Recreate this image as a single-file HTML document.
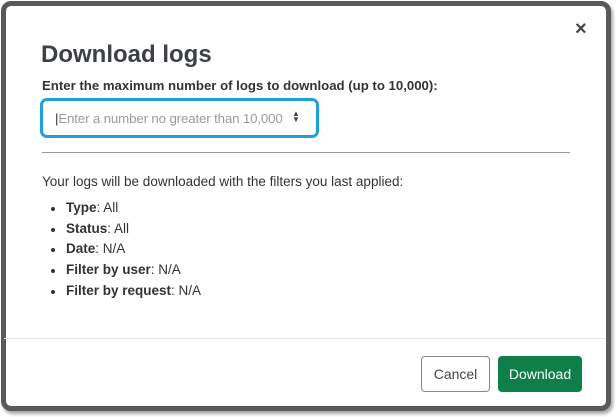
<!DOCTYPE html>
<html><head><style>
*{box-sizing:border-box;margin:0;padding:0}
body{width:616px;height:417px;background:#fff;font-family:"Liberation Sans",sans-serif;position:relative;overflow:hidden;color:#333}
.modal{position:absolute;left:1px;top:1px;width:610px;height:410px;border:5px solid #5a5a5a;border-radius:10px;background:#fff;box-shadow:2px 3px 3px rgba(0,0,0,.35)}
.x{position:absolute;left:575px;top:18px;font-size:20px;font-weight:bold;color:#444}
h1{position:absolute;left:41px;top:41px;font-size:24px;font-weight:bold;color:#3d4145}
.lbl{position:absolute;left:42px;top:78px;font-size:13.2px;font-weight:bold;color:#333}
.inp{position:absolute;left:40px;top:98px;width:279px;height:40px;border:3px solid #1ea0d8;border-radius:7px;font-size:13.3px;color:#9a9a9a;padding:10px 0 0 12px;letter-spacing:-0.15px}
.spin{position:absolute;left:292px;top:111px;font-size:8px;color:#444;line-height:6px}
.sep{position:absolute;left:42px;top:152px;width:528px;height:1px;background:#999}
.t{position:absolute;left:42px;top:174px;font-size:13.5px;color:#333}
ul{position:absolute;left:50px;top:200px;font-size:13.5px;list-style:none}
li{height:20.7px;position:relative;padding-left:16px}
li:before{content:"";position:absolute;left:1px;top:7px;width:4px;height:4px;border-radius:50%;background:#333}
.foot{position:absolute;left:4px;top:338px;width:602px;height:1px;background:#e6e6e6}
.btn{position:absolute;top:356px;height:36px;border-radius:4px;font-size:14px;text-align:center;line-height:34px}
.c{left:421px;width:69px;border:1px solid #888;color:#444;background:#fff}
.d{left:498px;width:84px;background:#0f7f4a;color:#fff;border:1px solid #0f7f4a}
</style></head><body>
<div class="modal"></div>
<div class="x">×</div>
<h1>Download logs</h1>
<div class="lbl">Enter the maximum number of logs to download (up to 10,000):</div>
<div class="inp"><span style="color:#333;font-weight:300">|</span>Enter a number no greater than 10,000</div>
<div class="spin">▲<br>▼</div>
<div class="sep"></div>
<div class="t">Your logs will be downloaded with the filters you last applied:</div>
<ul>
<li><b>Type</b>: All</li>
<li><b>Status</b>: All</li>
<li><b>Date</b>: N/A</li>
<li><b>Filter by user</b>: N/A</li>
<li><b>Filter by request</b>: N/A</li>
</ul>
<div class="foot"></div>
<div class="btn c">Cancel</div>
<div class="btn d">Download</div>
</body></html>
